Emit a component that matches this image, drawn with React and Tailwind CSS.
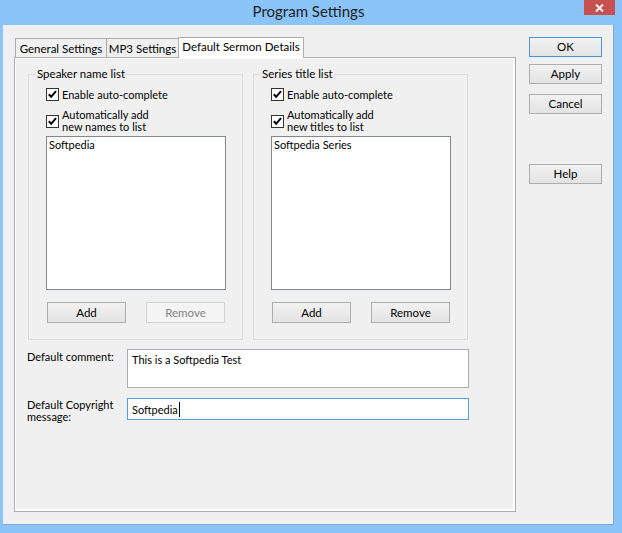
import React from "react";

const FONT = { fontFamily: 'Lato, "Noto Sans", "Segoe UI", sans-serif' };

function Check() {
  return (
    <span className="w-[13px] h-[13px] shrink-0 border border-[#333333] bg-white flex items-center justify-center">
      <svg width="11" height="11" viewBox="0 0 11 11">
        <polyline points="1.8,5.2 4.2,7.8 9,2.2" fill="none" stroke="#000" strokeWidth="2" />
      </svg>
    </span>
  );
}

function Btn({ children, w = "w-[79px]", h = "h-[21px]", disabled, def, className = "" }) {
  return (
    <div
      className={`${w} ${h} flex items-center justify-center text-[11.5px] leading-none whitespace-nowrap border ${
        disabled
          ? "border-[#D2D2D2] bg-[#F4F4F4] text-[#838383]"
          : def
          ? "border-[#4A94DE] bg-gradient-to-b from-[#F2F2F2] to-[#E3E3E3] text-black"
          : "border-[#ADADAD] bg-gradient-to-b from-[#F2F2F2] to-[#E3E3E3] text-black"
      } ${className}`}
    >
      {children}
    </div>
  );
}

function Group({ title, line2a, line2b, item, removeDisabled }) {
  return (
    <fieldset className="w-[215px] border border-[#DCDCDC] m-0 p-0">
      <legend className="ml-[7px] px-[1px] text-[11.5px] leading-[14px] text-black whitespace-nowrap">{title}</legend>
      <div className="pl-[17px] pb-[16px]">
        <div className="mt-[6px] h-[14px] flex items-center gap-[3px]">
          <Check />
          <span className="text-[11px] leading-[13px] whitespace-nowrap">Enable auto-complete</span>
        </div>
        <div className="mt-[7px] h-[26px] flex items-center gap-[3px]">
          <Check />
          <span className="text-[11px] leading-[12px] whitespace-nowrap">
            {line2a}
            <br />
            {line2b}
          </span>
        </div>
        <div className="mt-[2px] w-[180px] h-[154px] border border-[#828790] bg-white pl-[2px] pt-[1px] text-[11px] leading-[14px]">
          {item}
        </div>
        <div className="mt-[12px] flex gap-[20px] pl-[1px]">
          <Btn>Add</Btn>
          <Btn disabled={removeDisabled}>Remove</Btn>
        </div>
      </div>
    </fieldset>
  );
}

export default function App() {
  return (
    <div style={FONT} className="w-[622px] h-[533px] bg-[#8AC4F8] flex flex-col pl-[3px] pr-[8px] pb-[8px] text-black">
      {/* title bar */}
      <div className="h-[25px] grid grid-cols-[1fr_auto_1fr] items-start">
        <div />
        <div className="text-[15px] leading-[22px] text-[#1E1E1E] whitespace-nowrap">Program Settings</div>
        <div className="justify-self-end -mr-[1px] w-[31px] h-[15px] bg-[#C75050] flex items-center justify-center">
          <svg width="9" height="8" viewBox="0 0 9 8">
            <path d="M1 0.5 L8 7.5 M8 0.5 L1 7.5" stroke="#fff" strokeWidth="1.8" />
          </svg>
        </div>
      </div>

      {/* client */}
      <div className="flex-1 bg-[#F0F0F0] flex pt-[12px] pl-[11px] border-r border-b border-[#7FA9D2]">
        <div className="w-[502px] flex flex-col">
          <div className="h-[20px] flex items-end relative z-10 text-[11.5px] whitespace-nowrap">
            <div className="ml-[1px] w-[92px] h-[19px] border border-b-0 border-[#ACACAC] bg-[#F0F0F0] pt-[2px] leading-[15px] text-center">
              General Settings
            </div>
            <div className="w-[72px] h-[19px] border border-l-0 border-b-0 border-[#ACACAC] bg-[#F0F0F0] pt-[2px] leading-[15px] text-center">
              MP3 Settings
            </div>
            <div className="-ml-[1px] w-[126px] h-[21px] -mb-[1px] border border-b-0 border-[#ACACAC] bg-white pt-[1px] leading-[15px] text-center">
              Default Sermon Details
            </div>
          </div>
          <div className="h-[455px] border border-[#ACACAC] bg-[#F0F0F0] shadow-[inset_1px_1px_0_#fff,inset_-2px_-2px_0_#fff] pl-[13px] pt-[9px] text-[11px]">
            <div className="flex gap-[10px]">
              <Group
                title="Speaker name list"
                line2a="Automatically add"
                line2b="new names to list"
                item="Softpedia"
                removeDisabled
              />
              <Group
                title="Series title list"
                line2a="Automatically add"
                line2b="new titles to list"
                item="Softpedia Series"
              />
            </div>
            <div className="mt-[9px] flex">
              <div className="-ml-[1px] w-[100px] pt-[1px] leading-[13px] whitespace-nowrap">Default comment:</div>
              <div className="w-[342px] h-[39px] border border-[#ABADB3] bg-white pl-[4px] pt-[3px] leading-[13px]">
                This is a Softpedia Test
              </div>
            </div>
            <div className="mt-[10px] flex">
              <div className="-ml-[1px] w-[100px] pt-[1px] leading-[12px] whitespace-nowrap">
                Default Copyright
                <br />
                message:
              </div>
              <div className="w-[342px] h-[22px] border border-[#569DE5] bg-white pl-[4px] flex items-center leading-[13px]">
                Softpedia
                <span className="inline-block w-px h-[15px] bg-black ml-[1px]" />
              </div>
            </div>
          </div>
        </div>

        <div className="ml-[13px] flex flex-col">
          <Btn w="w-[73px]" h="h-[20px]" def>OK</Btn>
          <Btn w="w-[73px]" h="h-[20px]" className="mt-[7px]">Apply</Btn>
          <Btn w="w-[73px]" h="h-[20px]" className="mt-[10px]">Cancel</Btn>
          <Btn w="w-[73px]" h="h-[20px]" className="mt-[50px]">Help</Btn>
        </div>
      </div>
    </div>
  );
}
